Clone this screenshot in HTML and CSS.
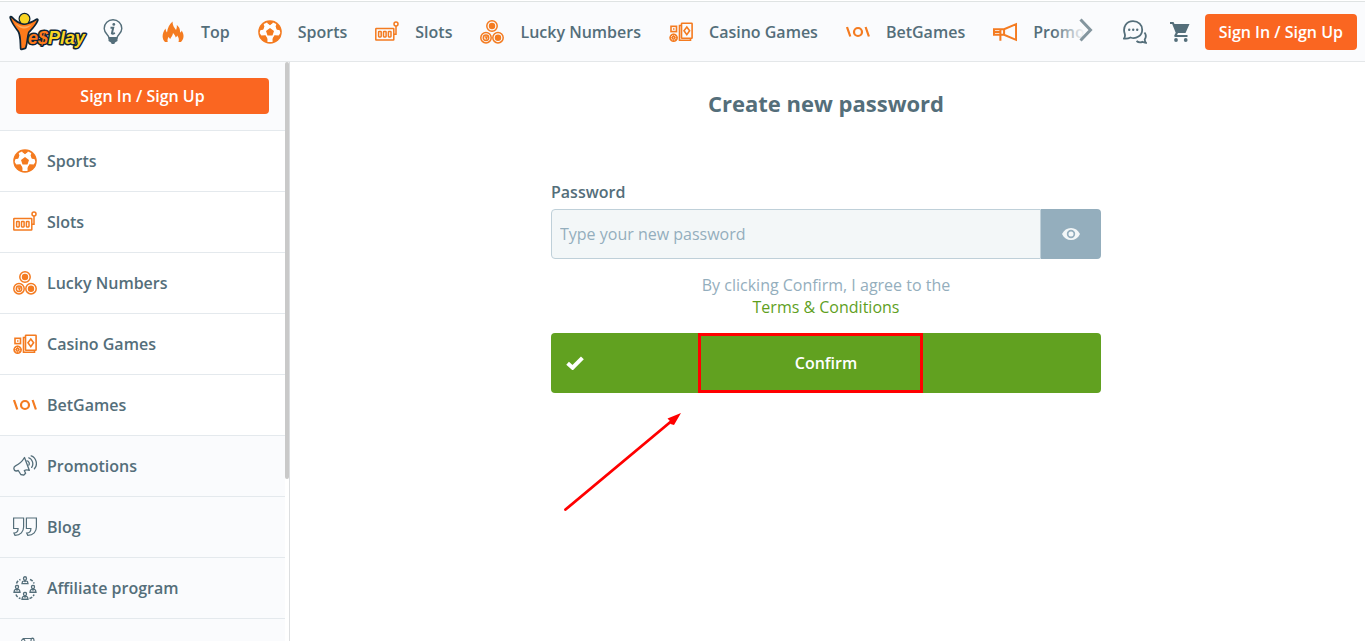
FILE: index.html
```html
<!DOCTYPE html>
<html lang="en">
<head>
<meta charset="utf-8">
<meta name="viewport" content="width=device-width, initial-scale=1">
<title>YesPlay - Create new password</title>
<link rel="stylesheet" href="styles.css">
</head>
<body>
<svg class="sprite" aria-hidden="true">
  <symbol id="i-flame" viewBox="0 0 24 24"><path fill="currentColor" d="M4 22C1 19 .5 14 4.500 8.500c.3 2 .8 3 1.500 4C6.500 8 8.500 4 11.500 1.500 11.500 5 13 7.500 15 10c.8-1.800 1-3.300.8-5 3.200 2.500 3.200 5 3.400 7.500.8-.4 1.200-1 1.500-2C23.500 15 23 19 20 22h-2.500c.8-2.500.2-4.500-1.300-6.500-.4 1-.8 1.500-1.500 2-.6-2-1.400-3.300-2.700-4.500-.2 2.500-1.800 4-2.800 6-.8-.6-1.200-1.300-1.400-2.200C6.500 18.500 6.300 20 6.700 22z"/></symbol>
  <symbol id="i-ball" viewBox="0 0 24 24"><circle cx="12" cy="12" r="11.800" fill="currentColor"/><path fill="#fff" d="M12 4.500 9 2.600 5.800 4l.2 4L2.200 10.600 1.700 13l2 3.300 4-.6 1.600 2.600.2 3.600h5l.2-3.600 1.600-2.600 4 .6 2-3.300-.5-2.400L18 8l.2-4L15 2.600z"/><path fill="currentColor" d="m12 8 4 3-1.500 4.600h-5L8 11zM9.200 3 12 5.200 14.800 3l-1-1.500h-3.600zM2 10l3.200-.2L6.500 6 4.600 4.400 2 7zM22 10l-3.200-.2L17.500 6l1.900-1.600L22 7zM3 15.500l4.500-.2 1.800 4.500-1.300 2L4.500 19.500zM21 15.500l-4.500-.2-1.800 4.500 1.300 2 3.500-2.300z"/></symbol>
  <symbol id="i-slots" viewBox="0 0 24 24"><g fill="none" stroke="currentColor" stroke-width="1.500"><rect x=".8" y="8.500" width="18" height="11.500" rx=".5"/><rect x="3.600" y="11.500" width="2.600" height="5.400" rx=".6"/><rect x="8.500" y="11.500" width="2.600" height="5.400" rx=".6"/><rect x="13.400" y="11.500" width="2.600" height="5.400" rx=".6"/><circle cx="21" cy="4" r="2"/><path d="M19 14.200h2V6"/></g></symbol>
  <symbol id="i-lucky" viewBox="0 0 24 24"><g fill="none" stroke="currentColor" stroke-width="1.500"><circle cx="12" cy="6" r="5.200"/><circle cx="6" cy="17.700" r="5.200"/><circle cx="18" cy="17.700" r="5.200"/><circle cx="6" cy="17.700" r="2.700"/><path d="M4.700 17h2.300l-1 2.500"/></g><g fill="currentColor"><circle cx="12" cy="6" r="3.200"/><circle cx="18" cy="17.700" r="3.200"/></g></symbol>
  <symbol id="i-casino" viewBox="0 0 24 24"><g fill="none" stroke="currentColor" stroke-width="1.600"><rect x="12.500" y="3.200" width="10.600" height="15" rx=".5"/><path d="M12.500 5.500h-2v14.800h11v-2M17.800 7l2.800 3.800-2.800 3.800-2.800-3.800z"/><rect x="2" y="6.300" width="5.500" height="5.300"/><circle cx="4.600" cy="17.700" r="3.500"/><circle cx="4.600" cy="17.700" r="1.300"/></g><path fill="currentColor" d="M4 8.200h1.500v1.500H4z"/><path stroke="currentColor" stroke-width="1" d="M4.600 13.800v2M4.600 19.500v2M.8 17.700h2M6.500 17.700h2M2 15l1.500 1.500M7.300 15l-1.500 1.500M2 20.400 3.500 19M7.300 20.400 5.800 19"/></symbol>
  <symbol id="i-bet" viewBox="0 0 24 24"><g fill="none" stroke="currentColor" stroke-width="2.200"><circle cx="12" cy="12" r="4"/><path d="m1 7 3.300 9.500M19.600 7l3.300 9.500"/></g></symbol>
  <symbol id="i-horn" viewBox="0 0 26 24"><path fill="none" stroke="currentColor" stroke-width="2.200" d="M1 9h11L25 3.500v17L12 15H1zM12 9v6M8 9v12.500M1 12h7"/></symbol>
  <symbol id="i-promo" viewBox="0 0 24 24"><g fill="none" stroke="currentColor" stroke-width="1.300" stroke-linejoin="round" stroke-linecap="round"><path d="M11.500 3.500c-2 3.500-5 6.500-9 8.300-2.500 1.200-2 5.500.8 5.200l2-.5 2.500 4 2.800.7 2-2-1.300-2.700c1.500-.7 3-.7 5-.2z"/><path d="M14 6.800c1.700 0 3 2.800 1.800 4.300M15.700 3.800c3.500.7 5.400 6.400 3 9.600M18.200 1.800c5 1.600 7 9 3.200 13"/></g></symbol>
  <symbol id="i-quote" viewBox="0 0 24 24"><path fill="none" stroke="currentColor" stroke-width="1.200" d="M.6 3h10v9c0 4.500-3 8.300-8.600 8.300L.9 18c3 0 4.200-1.500 4.200-4.500H.6zM13.400 3h10v9c0 4.500-3 8.300-8.600 8.300L13.700 18c3 0 4.200-1.500 4.200-4.500h-4.500z"/></symbol>
  <symbol id="i-person" viewBox="0 0 8 9"><path fill="none" stroke="currentColor" stroke-width="1.400" d="M4 .8a1.500 1.800 0 0 1 0 3.800A1.500 1.800 0 0 1 4 .8zM.8 8.200c0-2 .8-2.800 2.200-3.200l1 1 1-1c1.400.4 2.200 1.200 2.200 3.200z"/></symbol>
  <symbol id="i-affiliate" viewBox="0 0 24 24"><use href="#i-person" x="8" y="0" width="8" height="8.500"/><use href="#i-person" x="0" y="8.500" width="8" height="8.500"/><use href="#i-person" x="16" y="8.500" width="8" height="8.500"/><use href="#i-person" x="8" y="15.500" width="8" height="8.500"/><path fill="none" stroke="currentColor" stroke-width="1.500" stroke-dasharray="3 1.500" d="M3.500 7.500q1-3 4-4M17 3.500q3 1 4 4M3 18.500q1 3 4.500 4M16.500 22.500q3.500-1 4.500-4"/></symbol>
  <symbol id="i-scroll" viewBox="0 0 24 24"><path fill="none" stroke="currentColor" stroke-width="1.100" d="M12 4.500c0-3-3.500-3-3.500 0H12v16h9v-17c0-3.200-3-3.200-3 0V5M9.500 1.500H20M13 8h5M13 11h5"/></symbol>
  <symbol id="i-bulb" viewBox="0 0 20 26"><path fill="none" stroke="currentColor" stroke-width="1.400" d="M6 19c0-3-4.800-4.500-4.800-9.600a8.800 8.600 0 0 1 17.600 0C18.800 14.500 14 16 14 19z"/><path fill="currentColor" d="M5.500 18h9v4L12 23.500l-.7 1.500H8.700L8 23.500 5.500 22z"/><circle cx="10.800" cy="5.400" r="1.400" fill="currentColor"/><path fill="none" stroke="currentColor" stroke-width="2" d="M7.500 8.800h2.700l-1.300 5.700q.7.900 2.900-.6"/></symbol>
  <symbol id="i-chat" viewBox="0 0 24 24"><g fill="none" stroke="currentColor" stroke-width="1.800"><path d="M1 18.500c1.200-1.500 1.300-2.700.8-4.500C-.8 6.500 4 1.200 10 1.200c5.500 0 9.200 3.700 9.200 8.500 0 6-6 9.800-11.700 7.800C5.500 18.500 3.500 19 1 18.500z"/><path d="M21.500 12.500c2 2.500 1.500 5 .2 7 .2 1.500.6 2.500 1.300 3.300-1.500 0-2.500-.3-3.500-1-2 .8-4.300.6-6-.8"/></g><g fill="currentColor"><circle cx="6.200" cy="9.800" r="1.200"/><circle cx="10.200" cy="9.800" r="1.200"/><circle cx="14.200" cy="9.800" r="1.200"/></g></symbol>
  <symbol id="i-cart" viewBox="0 0 20 20"><path fill="currentColor" d="M0 0h3.500l1 2H19.500L15.500 11H8l-1 2h10.500v2H5.500c-1.300 0-1.500-1-1-2l1.200-2.300L2.200 2H0z"/><circle cx="6" cy="18" r="1.900" fill="currentColor"/><circle cx="15.700" cy="18" r="1.900" fill="currentColor"/></symbol>
</svg>

<header class="topbar">
  <a class="brand" href="#" aria-label="YesPlay">
    <svg class="logo" viewBox="0 0 80 40">
      <g stroke="#0d2436" stroke-linejoin="round" paint-order="stroke">
        <path fill="#ff7a1a" stroke-width="3.400" d="M3 5.500c4 4.500 8 7 13 7.500 5.500-.5 9-2.500 13-5-2 5-5.500 8-9 12-1.500 5-1.500 10.500-3 15.500l-3.500 1c-.5-8 0-12.500-2.500-17.500C8 15 4.500 10.500 3 5.500z"/>
        <circle cx="16.500" cy="6.800" r="4.800" fill="#f9d525" stroke-width="2.400"/>
      </g>
      <path fill="#ffab5e" d="M6 9.500c3 3.500 6 5 11 5 3 0 5-1 7-2.500-3 4-6 5-9 4.500-3.500-.5-6.500-3.500-9-7z"/>
      <text class="logo-text" x="20" y="32"><tspan class="logo-es">e$</tspan><tspan class="logo-play">Play</tspan></text>
    </svg>
  </a>
  <a class="info" href="#" aria-label="Information"><svg><use href="#i-bulb"/></svg></a>
  <nav class="categories" aria-label="Categories">
    <a href="#"><svg class="icon"><use href="#i-flame"/></svg>Top</a>
    <a href="#"><svg class="icon"><use href="#i-ball"/></svg>Sports</a>
    <a href="#"><svg class="icon"><use href="#i-slots"/></svg>Slots</a>
    <a href="#"><svg class="icon"><use href="#i-lucky"/></svg>Lucky Numbers</a>
    <a href="#"><svg class="icon"><use href="#i-casino"/></svg>Casino Games</a>
    <a href="#"><svg class="icon"><use href="#i-bet"/></svg>BetGames</a>
    <a href="#"><svg class="icon"><use href="#i-horn"/></svg>Promotions</a>
    <button class="next" type="button" aria-label="More categories"><svg viewBox="0 0 14 24"><path fill="none" stroke="currentColor" stroke-width="3" d="m1.500 1.500 10 10.500-10 10.500"/></svg></button>
  </nav>
  <div class="tools">
    <a class="chat" href="#" aria-label="Chat"><svg><use href="#i-chat"/></svg></a>
    <a class="cart" href="#" aria-label="Cart"><svg><use href="#i-cart"/></svg></a>
    <button class="sign" type="button">Sign In / Sign Up</button>
  </div>
</header>

<div class="layout">
  <aside class="sidebar">
    <div class="menu">
      <div class="menu-head"><button class="sign" type="button">Sign In / Sign Up</button></div>
      <a class="menu-item game" href="#"><svg class="icon"><use href="#i-ball"/></svg>Sports</a>
      <a class="menu-item game" href="#"><svg class="icon"><use href="#i-slots"/></svg>Slots</a>
      <a class="menu-item game" href="#"><svg class="icon"><use href="#i-lucky"/></svg>Lucky Numbers</a>
      <a class="menu-item game" href="#"><svg class="icon"><use href="#i-casino"/></svg>Casino Games</a>
      <a class="menu-item game" href="#"><svg class="icon"><use href="#i-bet"/></svg>BetGames</a>
      <a class="menu-item" href="#"><svg class="icon"><use href="#i-promo"/></svg>Promotions</a>
      <a class="menu-item" href="#"><svg class="icon"><use href="#i-quote"/></svg>Blog</a>
      <a class="menu-item" href="#"><svg class="icon"><use href="#i-affiliate"/></svg>Affiliate program</a>
      <a class="menu-item" href="#" aria-label="Rules"><svg class="icon"><use href="#i-scroll"/></svg></a>
    </div>
    <div class="scrollbar"><div class="thumb"></div></div>
  </aside>

  <main>
    <form class="reset">
      <h1>Create new password</h1>
      <label for="password">Password</label>
      <div class="field">
        <input id="password" type="password" placeholder="Type your new password">
        <button class="reveal" type="button" aria-label="Show password"><svg viewBox="0 0 18 12"><path fill="#f3f7f8" fill-rule="evenodd" d="M0 6C2 2 5 0 9 0s7 2 9 6c-2 4-5 6-9 6S2 10 0 6zm9-4.200a4.200 4.200 0 1 0 0 8.400 4.200 4.200 0 0 0 0-8.400zm0 1.700a2.500 2.500 0 1 1 0 5 2.500 2.500 0 0 1 0-5z"/></svg></button>
      </div>
      <p class="terms">By clicking Confirm, I agree to the<br><a href="#">Terms &amp; Conditions</a></p>
      <div class="action">
        <button class="confirm" type="submit"><svg viewBox="0 0 18 14"><path fill="none" stroke="#fff" stroke-width="4" d="m1.600 7.200 5 4.500L16.400 1.800"/></svg><span>Confirm</span></button>
        <div class="highlight"></div>
        <svg class="arrow" viewBox="0 0 120 100"><path stroke="#f00" stroke-width="2.800" stroke-linecap="round" d="M2.500 96.500 108 8.500"/><path fill="#f00" d="M118 0 104.500 5.500l2.500 2.500.5 3 3.500 1z"/></svg>
      </div>
    </form>
  </main>
</div>
</body>
</html>
```
FILE: styles.css
```css
* { box-sizing: border-box; }

body {
  margin: 0;
  height: 100vh;
  display: flex;
  flex-direction: column;
  overflow: hidden;
  background: #fff;
  color: #546e7a;
  font: 600 16px/22px "Open Sans", "Noto Sans", sans-serif;
}

a { color: inherit; text-decoration: none; }
button { font: inherit; border: 0; padding: 0; cursor: pointer; }
svg { display: block; flex: none; }
.sprite { position: absolute; width: 0; height: 0; }

.icon { width: 24px; height: 24px; }

.topbar {
  display: flex;
  align-items: center;
  flex: none;
  margin-top: 1px;
  height: 61px;
  padding: 0 8px;
  background: #fafbfd;
  border-top: 1px solid #dfe3e3;
  border-bottom: 1px solid #e4e7e9;
}

.logo { width: 80px; height: 40px; overflow: visible; }
.logo-text {
  font: italic 700 18px "Liberation Sans", sans-serif;
  stroke: #0d2436;
  stroke-width: 3px;
  stroke-linejoin: round;
  paint-order: stroke;
}
.logo-es { fill: #ff7a1a; }
.logo-play { fill: #f9d525; }

.info { margin-left: 15px; }
.info svg { width: 20px; height: 26px; }

.categories {
  position: relative;
  flex: 1;
  min-width: 0;
  display: flex;
  align-items: center;
  gap: 28px;
  height: 59px;
  margin-left: 38px;
  overflow: hidden;
}
.categories a {
  display: flex;
  align-items: center;
  flex: none;
  gap: 16px;
}
.categories .icon { color: #f47b20; }
.categories::after {
  content: "";
  position: absolute;
  top: 0;
  right: 0;
  width: 40px;
  height: 100%;
  background: linear-gradient(to right, rgba(250, 251, 253, 0), #fafbfd 80%);
}
.next {
  position: absolute;
  z-index: 1;
  top: 16px;
  right: 0;
  background: none;
  color: #84969f;
}
.next svg { width: 14px; height: 24px; }

.tools {
  display: flex;
  align-items: center;
  flex: none;
  margin-left: 30px;
}
.chat svg { width: 24px; height: 24px; }
.cart { margin: 0 15px 0 23px; }
.cart svg { width: 20px; height: 20px; }

.sign {
  height: 36px;
  padding: 0 14px;
  border-radius: 4px;
  background: #fa6621;
  color: #fff;
}

.layout { flex: 1; min-height: 0; display: flex; }

.sidebar {
  display: flex;
  flex: none;
  width: 290px;
  border-right: 1px solid #dcdee0;
}
.menu { flex: 1; overflow: hidden; background: #fafbfd; }
.menu-head { padding: 16px; border-bottom: 1px solid #e4e9ed; }
.menu-head .sign { width: 100%; }
.menu-item {
  display: flex;
  align-items: center;
  gap: 10px;
  height: 61px;
  padding-left: 13px;
  border-bottom: 1px solid #e4e9ed;
}
.game { background: #fff; }
.game .icon { color: #f47b20; }
.scrollbar { width: 4px; background: #fff; }
.thumb { height: 72%; border-radius: 2px; background: #c9c9c9; }

main { flex: 1; padding: 28px 3px 0 0; }
.reset { width: 100%; max-width: 550px; margin: 0 auto; }
h1 {
  margin: 0 0 65px;
  font-size: 22px;
  line-height: 26px;
  font-weight: 700;
  text-align: center;
}
label { display: block; margin-bottom: 6px; }

.field { display: flex; height: 50px; }
.field input {
  flex: 1;
  min-width: 0;
  padding: 0 8px;
  border: 1px solid #bfd0d9;
  border-radius: 4px 0 0 4px;
  background: #f3f7f8;
  color: #546e7a;
  font: 400 16px/22px "Open Sans", "Noto Sans", sans-serif;
}
.field input::placeholder { color: #94aebd; opacity: 1; }
.reveal {
  display: flex;
  align-items: center;
  justify-content: center;
  width: 60px;
  border-radius: 0 4px 4px 0;
  background: #94aebd;
}
.reveal svg { width: 18px; height: 12px; }

.terms { margin: 15px 0; font-weight: 400; color: #94aebd; text-align: center; }
.terms a { color: #5f9f1e; }

.action { position: relative; }
.confirm {
  display: flex;
  align-items: center;
  width: 100%;
  height: 60px;
  padding: 0 33px 0 15px;
  border-radius: 4px;
  background: #61a120;
  color: #fff;
}
.confirm svg { width: 18px; height: 14px; }
.confirm span { flex: 1; }
.highlight {
  position: absolute;
  top: 0;
  left: 147px;
  width: 225px;
  height: 60px;
  border: 3px solid #f00;
}
.arrow {
  position: absolute;
  top: 80px;
  left: 12px;
  width: 120px;
  height: 100px;
}
```
